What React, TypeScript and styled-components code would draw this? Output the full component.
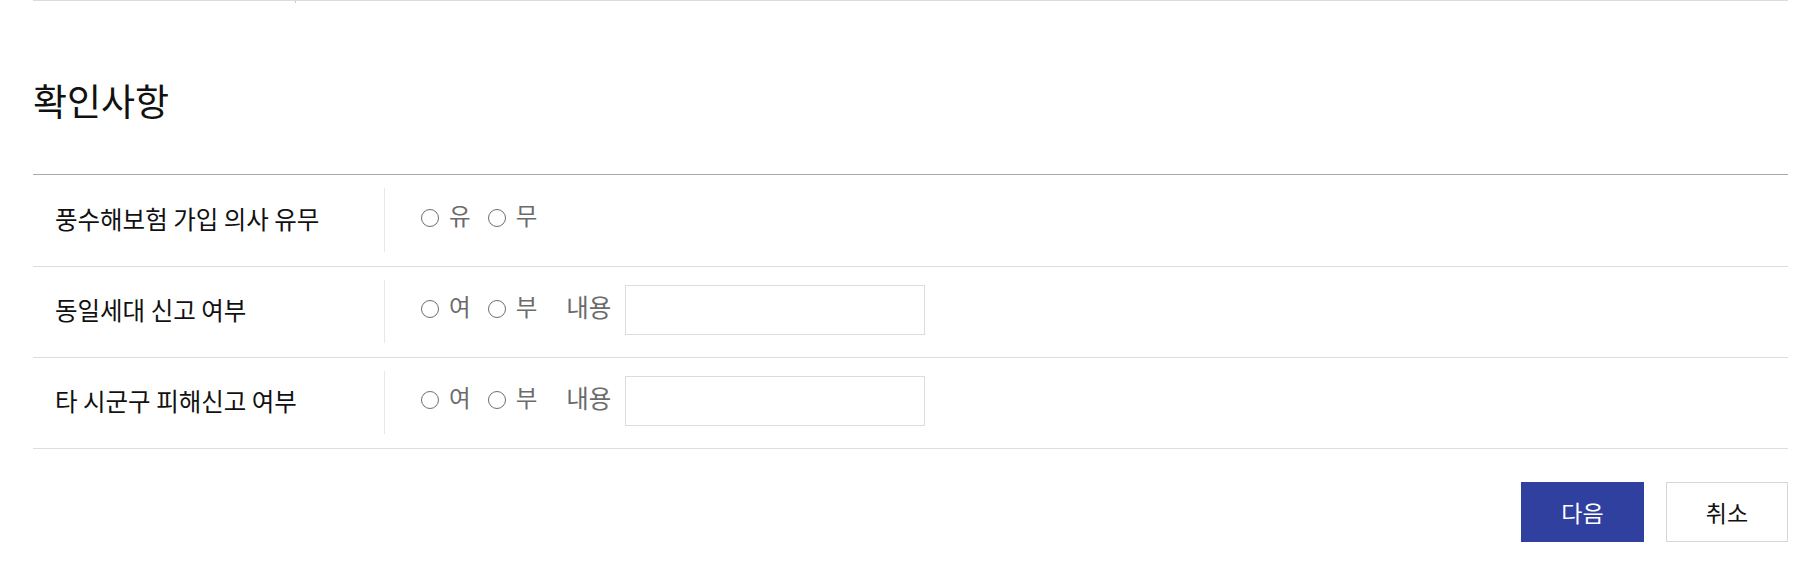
import React from "react";
import styled, { createGlobalStyle } from "styled-components";

const GlobalStyle = createGlobalStyle`
  html, body {
    margin: 0;
    padding: 0;
    background: #fff;
  }
  body {
    font-family: "Noto Sans CJK KR", "Noto Sans", sans-serif;
    color: #111;
  }
`;

const Page = styled.div`
  padding: 0 16px 40px 33px;
`;

const PrevTableEnd = styled.div`
  display: flex;
  border-top: 1px solid #dcdcdc;
`;

const PrevHeadStub = styled.div`
  width: 262px;
  height: 2px;
  border-right: 1px solid #c8c8c8;
`;

const Title = styled.h2`
  margin: 77px 0 0;
  font-size: 37px;
  line-height: 40px;
  font-weight: 400;
  color: #111;
`;

const Table = styled.div`
  margin-top: 54px;
  border-top: 1px solid #a9a9a9;
`;

const Row = styled.div<{ $first?: boolean }>`
  display: flex;
  min-height: ${(p) => (p.$first ? 91 : 90)}px;
  border-bottom: 1px solid #dddddd;
`;

const HeadCell = styled.div`
  width: 329px;
  margin: 13px 0 14px;
  padding: 0 0 4px 22px;
  display: flex;
  align-items: center;
  border-right: 1px solid #e8e8e8;
  font-size: 24.5px;
  color: #111;
`;

const BodyCell = styled.div`
  flex: 1;
  display: flex;
  align-items: center;
  padding: 0 0 12px 36px;
  font-size: 23.5px;
  color: #6b6b6b;
`;

const RadioLabel = styled.label`
  display: inline-flex;
  align-items: center;
  margin-right: 17px;
  cursor: pointer;
`;

const RadioDot = styled.span`
  box-sizing: border-box;
  width: 18px;
  height: 18px;
  margin-top: 6px;
  margin-right: 10px;
  border: 1.5px solid #6e6e6e;
  border-radius: 50%;
`;

const FieldLabel = styled.span`
  margin-left: 12px;
  margin-right: 14px;
  font-size: 24.5px;
`;

const TextField = styled.input`
  box-sizing: border-box;
  width: 300px;
  height: 50px;
  margin-top: 8px;
  border: 1px solid #dcdcdc;
  outline: none;
  font-size: 18px;
  padding: 0 10px;
`;

const Actions = styled.div`
  display: flex;
  justify-content: flex-end;
  gap: 22px;
  margin-top: 33px;
`;

const Button = styled.button<{ $primary?: boolean }>`
  box-sizing: border-box;
  width: ${(p) => (p.$primary ? 123 : 122)}px;
  height: 60px;
  font-family: inherit;
  font-size: 23px;
  border: 1px solid ${(p) => (p.$primary ? "#30409f" : "#d6d6d6")};
  background: ${(p) => (p.$primary ? "#30409f" : "#fff")};
  color: ${(p) => (p.$primary ? "#fff" : "#111")};
  cursor: pointer;
`;

type Question = {
  label: string;
  options: string[];
  withDetail?: boolean;
};

const questions: Question[] = [
  { label: "풍수해보험 가입 의사 유무", options: ["유", "무"] },
  { label: "동일세대 신고 여부", options: ["여", "부"], withDetail: true },
  { label: "타 시군구 피해신고 여부", options: ["여", "부"], withDetail: true },
];

export default function App() {
  return (
    <>
      <GlobalStyle />
      <Page>
        <PrevTableEnd>
          <PrevHeadStub />
        </PrevTableEnd>
        <Title>확인사항</Title>
        <Table>
          {questions.map((q, i) => (
            <Row key={q.label} $first={i === 0}>
              <HeadCell>{q.label}</HeadCell>
              <BodyCell>
                {q.options.map((o) => (
                  <RadioLabel key={o}>
                    <RadioDot />
                    {o}
                  </RadioLabel>
                ))}
                {q.withDetail && (
                  <>
                    <FieldLabel>내용</FieldLabel>
                    <TextField type="text" />
                  </>
                )}
              </BodyCell>
            </Row>
          ))}
        </Table>
        <Actions>
          <Button $primary>다음</Button>
          <Button>취소</Button>
        </Actions>
      </Page>
    </>
  );
}
